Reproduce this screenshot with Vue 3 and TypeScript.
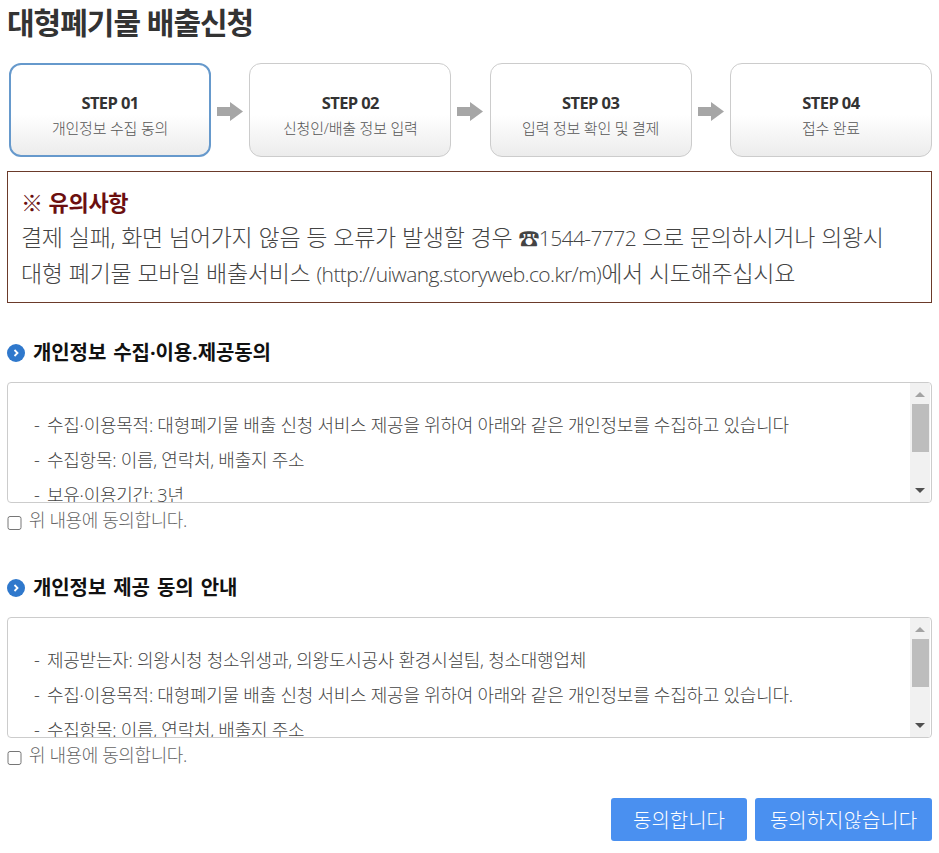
<script setup lang="ts">
const steps = [
  { no: 'STEP 01', label: '개인정보 수집 동의', active: true },
  { no: 'STEP 02', label: '신청인/배출 정보 입력', active: false },
  { no: 'STEP 03', label: '입력 정보 확인 및 결제', active: false },
  { no: 'STEP 04', label: '접수 완료', active: false },
]

const sections = [
  {
    title: '개인정보 수집·이용.제공동의',
    lines: [
      '수집·이용목적: 대형폐기물 배출 신청 서비스 제공을 위하여 아래와 같은 개인정보를 수집하고 있습니다',
      '수집항목: 이름, 연락처, 배출지 주소',
      '보유·이용기간: 3년',
    ],
  },
  {
    title: '개인정보 제공 동의 안내',
    lines: [
      '제공받는자: 의왕시청 청소위생과, 의왕도시공사 환경시설팀, 청소대행업체',
      '수집·이용목적: 대형폐기물 배출 신청 서비스 제공을 위하여 아래와 같은 개인정보를 수집하고 있습니다.',
      '수집항목: 이름, 연락처, 배출지 주소',
    ],
  },
]
</script>

<template>
  <div class="page">
    <h1 class="title">대형폐기물 배출신청</h1>

    <ol class="steps">
      <template v-for="(step, i) in steps" :key="step.no">
        <li class="step" :class="{ active: step.active }">
          <strong>{{ step.no }}</strong>
          <span>{{ step.label }}</span>
        </li>
        <li v-if="i < steps.length - 1" class="arrow">
          <svg width="26" height="19" viewBox="0 0 26 19">
            <path d="M0 5h13V0l13 9.5L13 19v-5H0z" fill="#a6a6a6" />
          </svg>
        </li>
      </template>
    </ol>

    <div class="notice">
      <p class="notice-title">※ 유의사항</p>
      <p>결제 실패, 화면 넘어가지 않음 등 오류가 발생할 경우 <span class="tel">☎1544-7772</span> 으로 문의하시거나 의왕시</p>
      <p>대형 폐기물 모바일 배출서비스 <span class="url">(http://uiwang.storyweb.co.kr/m)</span>에서 시도해주십시요</p>
    </div>

    <section v-for="sec in sections" :key="sec.title" class="agree">
      <h2 class="agree-title">
        <svg width="18" height="18" viewBox="0 0 18 18">
          <circle cx="9" cy="9" r="9" fill="#2f78cc" />
          <path d="M7.5 6l3 3-3 3" fill="none" stroke="#fff" stroke-width="1.8" />
        </svg>
        {{ sec.title }}
      </h2>
      <div class="terms">
        <div class="terms-text">
          <p v-for="line in sec.lines" :key="line">{{ line }}</p>
        </div>
        <div class="scrollbar">
          <span class="tri up"></span>
          <div class="track"><div class="thumb"></div></div>
          <span class="tri down"></span>
        </div>
      </div>
      <label class="check">
        <input type="checkbox" />
        위 내용에 동의합니다.
      </label>
    </section>

    <div class="actions">
      <button type="button">동의합니다</button>
      <button type="button">동의하지않습니다</button>
    </div>
  </div>
</template>

<style>
html,
body {
  margin: 0;
  background: #fff;
}
</style>

<style scoped>
.page {
  box-sizing: border-box;
  width: 939px;
  height: 853px;
  padding: 0 7px;
  overflow: hidden;
  font-family: "Open Sans", "Noto Sans CJK KR", sans-serif;
  color: #333;
}

.title {
  margin: 0;
  padding-top: 2px;
  font-size: 30px;
  line-height: 41px;
  font-weight: 700;
  letter-spacing: -1px;
}

.steps {
  display: flex;
  align-items: center;
  justify-content: space-between;
  list-style: none;
  margin: 20px 0 0;
  padding: 0 0 0 2px;
}

.step {
  box-sizing: border-box;
  width: 202px;
  height: 94px;
  padding-top: 9px;
  display: flex;
  flex-direction: column;
  align-items: center;
  justify-content: center;
  border: 1px solid #ccc;
  border-radius: 12px;
  background: linear-gradient(#fff 55%, #ececec);
}

.step.active {
  border: 2px solid #6699cc;
}

.step strong {
  font-size: 16.5px;
  line-height: 24px;
  letter-spacing: -0.6px;
}

.step span {
  margin-top: 3px;
  font-size: 15px;
  line-height: 20px;
  font-weight: 300;
  color: #555;
  letter-spacing: -0.2px;
}

.arrow {
  display: flex;
  margin-top: 3px;
}

.notice {
  margin-top: 14px;
  box-sizing: border-box;
  height: 132px;
  padding: 13px 13px;
  border: 1px solid #6b3a2a;
  font-size: 23px;
  line-height: 35px;
  font-weight: 300;
  color: #444;
  letter-spacing: -0.3px;
  word-spacing: 0.4px;
}

.notice p {
  margin: 0;
}

.notice-title {
  color: #6b0f0f;
  font-weight: 700;
  font-size: 22px;
}

.tel {
  font-size: 21px;
  letter-spacing: -0.6px;
}

.url {
  font-size: 21px;
  letter-spacing: -0.6px;
}

.agree {
  margin-top: 36px;
}

.agree + .agree {
  margin-top: 39px;
}

.agree-title {
  display: flex;
  align-items: center;
  gap: 8px;
  margin: 0;
  font-size: 20px;
  line-height: 28px;
  font-weight: 700;
  color: #111;
  letter-spacing: -0.1px;
  word-spacing: 2px;
}

.terms {
  display: flex;
  box-sizing: border-box;
  height: 121px;
  margin-top: 15px;
  border: 1px solid #ccc;
  border-radius: 4px;
  overflow: hidden;
}

.terms-text {
  flex: 1;
  padding: 25px 26px 0;
  overflow: hidden;
  font-size: 18px;
  line-height: 35px;
  font-weight: 300;
  color: #444;
  letter-spacing: -0.25px;
  white-space: nowrap;
}

.terms-text p {
  margin: 0;
}

.terms-text p::before {
  content: "-";
  display: inline-block;
  width: 13px;
}

.scrollbar {
  width: 20px;
  margin-right: 1px;
  display: flex;
  flex-direction: column;
  align-items: center;
  background: #f1f1f1;
}

.track {
  flex: 1;
  width: 17px;
  padding-top: 2px;
}

.thumb {
  height: 48px;
  background: #bdbdbd;
}

.tri {
  width: 0;
  height: 0;
  margin: 9px 0 5px;
  border-left: 5px solid transparent;
  border-right: 5px solid transparent;
}

.tri.up {
  border-bottom: 5px solid #a3a3a3;
}

.tri.down {
  margin: 5px 0 9px;
  border-top: 5px solid #505050;
}

.check {
  display: flex;
  align-items: center;
  gap: 7px;
  height: 32px;
  font-size: 18px;
  font-weight: 300;
  color: #666;
  letter-spacing: -0.4px;
}

.check input {
  margin: 8px 0 0;
  width: 15px;
  height: 14px;
}

.actions {
  display: flex;
  justify-content: flex-end;
  gap: 8px;
  margin-top: 28px;
}

.actions button {
  height: 43px;
  width: 177px;
  padding: 0;
  border: none;
  border-radius: 3px;
  background: #4a90f0;
  color: #fff;
  font: inherit;
  font-size: 20px;
  font-weight: 300;
}

.actions button:first-child {
  width: 136px;
}
</style>
